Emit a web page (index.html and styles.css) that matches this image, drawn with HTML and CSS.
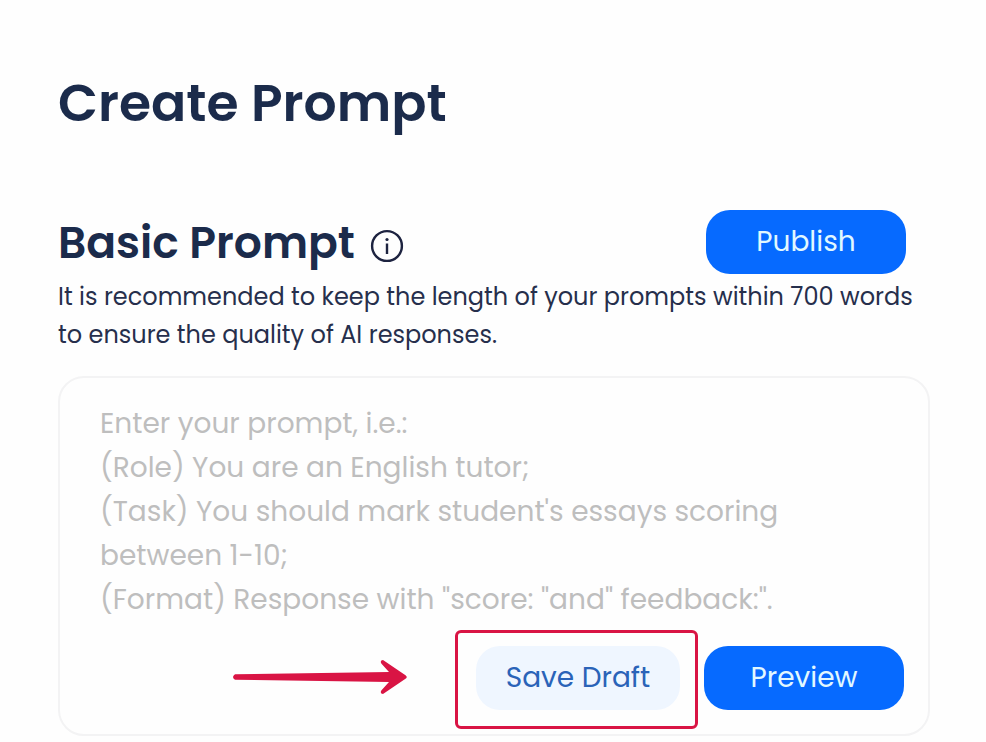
FILE: index.html
```html
<!DOCTYPE html>
<html lang="en">
<head>
<meta charset="utf-8">
<title>Create Prompt</title>
<link rel="stylesheet" href="styles.css">
</head>
<body>
<main class="page">
  <h1 class="title">Create Prompt</h1>
  <section class="section-head">
    <h2 class="subtitle">Basic Prompt</h2>
    <svg class="info" viewBox="0 0 34 34" aria-hidden="true">
      <circle cx="17" cy="17" r="14.9" fill="none" stroke="#1d2340" stroke-width="2.4"/>
      <circle cx="17" cy="10.5" r="1.6" fill="#1d2340"/>
      <path d="M17 14.500v10.500" stroke="#1d2340" stroke-width="2.4"/>
    </svg>
    <button class="btn publish">Publish</button>
  </section>
  <p class="hint">
    <span class="line">It is recommended to keep the length of your prompts within 700 words</span>
    <span class="line">to ensure the quality of AI responses.</span>
  </p>
  <section class="editor">
    <div class="placeholder">
      <span class="line">Enter your prompt, i.e.:</span>
      <span class="line">(Role) You are an English tutor;</span>
      <span class="line">(Task) You should mark student's essays scoring</span>
      <span class="line">between 1-10;</span>
      <span class="line">(Format) Response with "score: "and" feedback:".</span>
    </div>
    <div class="actions">
      <svg class="arrow" viewBox="0 0 176 36" aria-hidden="true">
        <path d="M4 15.200L158 13L150.500 4.800Q148.500 1.500 152 1L174.500 16.200Q177 18 174.500 19.800L152 35Q148.500 34.500 150.500 31.200L158 23L4 20.800Q0 18 4 15.200Z" fill="#d91444"/>
      </svg>
      <div class="highlight"><button class="btn draft">Save Draft</button></div>
      <button class="btn preview">Preview</button>
    </div>
  </section>
</main>
</body>
</html>
```
FILE: styles.css
```css
* { box-sizing: border-box; }
body {
  margin: 0;
  background: #fefefe;
  color: #1b2b4b;
  font-family: Poppins, Inter, "Liberation Sans", sans-serif;
  overflow: hidden;
}
.page { width: 986px; height: 742px; padding: 73px 56px 0 58px; }
.title {
  margin: 0;
  font-size: 52px;
  line-height: 60px;
  font-weight: 600;
  white-space: nowrap;
}
.section-head { display: flex; height: 64px; margin-top: 77px; padding-right: 24px; }
.subtitle {
  margin: 3px 0 0;
  font-size: 44px;
  line-height: 60px;
  font-weight: 600;
  width: 312px;
  white-space: nowrap;
}
.info { width: 34px; height: 34px; margin-top: 19px; }
.btn {
  width: 200px;
  height: 64px;
  padding: 0;
  border: 0;
  border-radius: 24px;
  background: #066aff;
  color: #e1f8ff;
  font: inherit;
  font-size: 28px;
  line-height: 62px;
  white-space: nowrap;
}
.publish { margin-left: auto; }
.hint { margin: 4px 0 0; font-size: 24px; line-height: 38px; color: #262f4c; }
.line { display: block; width: max-content; white-space: nowrap; }
.editor {
  width: 872px;
  height: 360px;
  margin-top: 22px;
  padding: 24px 24px 0 40px;
  border: 2px solid #f3f3f4;
  border-radius: 26px;
}
.placeholder { font-size: 28px; line-height: 44px; color: #bebebe; }
.actions { display: flex; align-items: center; height: 99px; margin-top: 8px; }
.arrow { width: 176px; height: 36px; margin: -5px 0 0 131px; }
.highlight {
  width: 243px;
  height: 99px;
  margin-left: 48px;
  padding: 13px 16px 0 18px;
  border: 3px solid #d91444;
  border-radius: 6px;
}
.draft { width: 204px; background: #eff6ff; color: #2a63b8; }
.preview { margin: -3px 0 0 6px; }
```
